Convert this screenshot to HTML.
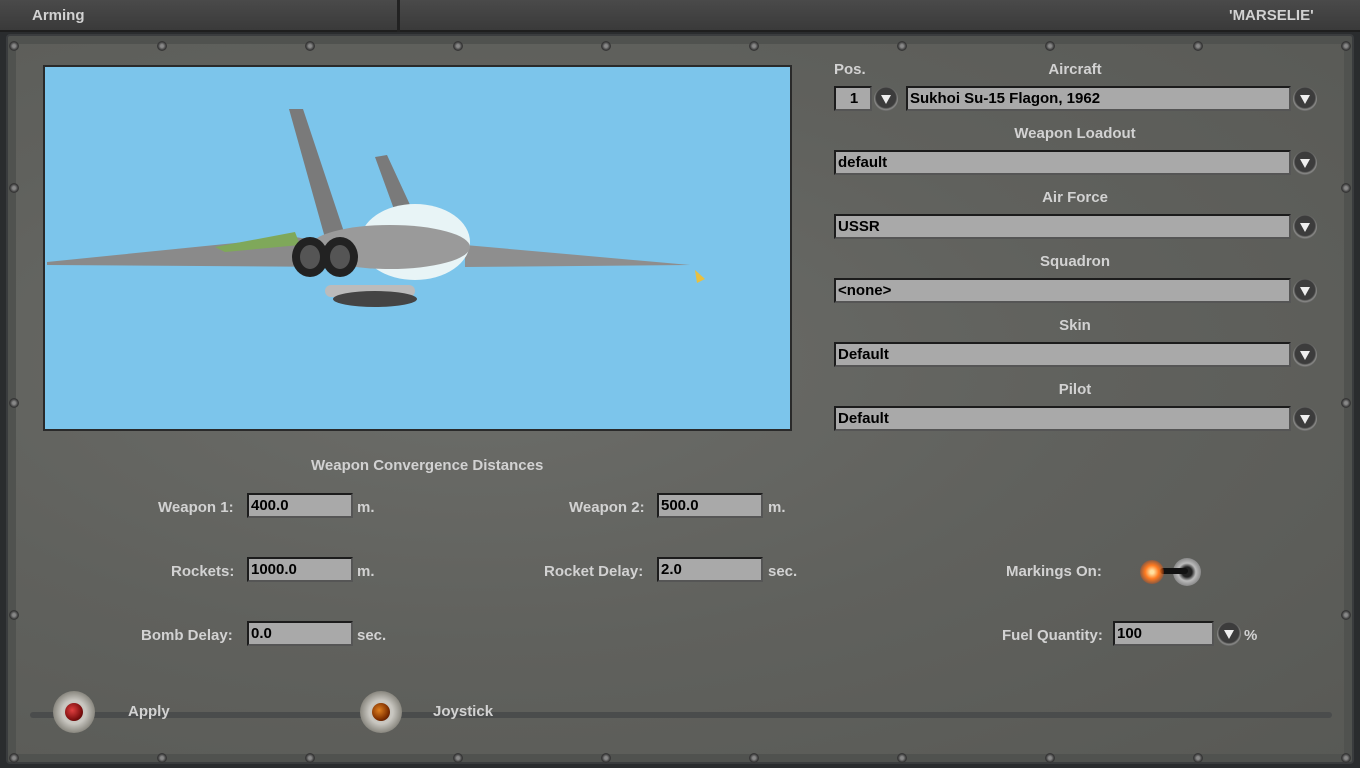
<!DOCTYPE html>
<html><head><meta charset="utf-8"><style>
*{margin:0;padding:0;box-sizing:border-box}
body{width:1360px;height:768px;overflow:hidden;background:#2a2c2e;font-family:"Liberation Sans",sans-serif;position:relative}
.top{position:absolute;left:0;top:0;width:1360px;height:32px;background:linear-gradient(#4a4a4a,#3a3a3a);border-bottom:2px solid #1e1e1e}
.top .d{position:absolute;left:397px;top:0;width:3px;height:32px;background:#222}
.t{position:absolute;color:#d2d2d2;font-size:15px;font-weight:bold;white-space:nowrap}
.panel{position:absolute;left:6px;top:34px;width:1348px;height:730px;background:radial-gradient(ellipse at 35% 45%,#6c6d69,#60615d 50%,#585955);border:2px solid #3a3c3e;border-radius:4px;box-shadow:inset 0 0 0 8px #50524f}
.preview{position:absolute;left:43px;top:65px;width:749px;height:366px;background:#7cc5eb;border:2px solid #2a2a2a}
.f{position:absolute;background:#a9a9a9;border:2px solid #1c1c1c;border-right-color:#555;border-bottom-color:#555;color:#000;font-size:15px;font-weight:bold;padding-left:2px;line-height:21px;height:25px;white-space:nowrap}
.dd{position:absolute;width:24px;height:24px;border-radius:50%;background:radial-gradient(circle at 50% 45%,#3c3c3c 55%,#8a8a88 65%,#4a4a4a 80%)}
.dd:after{content:"";position:absolute;left:7px;top:8px;border-left:5px solid transparent;border-right:5px solid transparent;border-top:9px solid #eee}
.c{text-align:center;width:300px}
.screw{position:absolute;width:10px;height:10px;border-radius:50%;background:radial-gradient(circle,#888 20%,#333 60%,#555)}
.btn{position:absolute;width:42px;height:42px;border-radius:50%;background:radial-gradient(circle,#c8c6c0 40%,#8a8880 70%,#4a4a48)}
.btn i{position:absolute;left:12px;top:12px;width:18px;height:18px;border-radius:50%}
</style></head><body>
<div class="top"><div class="d"></div></div>
<div class="t" style="left:32px;top:7px">Arming</div>
<div class="t" style="left:1229px;top:7px">'MARSELIE'</div>
<div class="panel"></div>
<div class="screw" style="left:9px;top:41px"></div><div class="screw" style="left:157px;top:41px"></div><div class="screw" style="left:305px;top:41px"></div><div class="screw" style="left:453px;top:41px"></div><div class="screw" style="left:601px;top:41px"></div><div class="screw" style="left:749px;top:41px"></div><div class="screw" style="left:897px;top:41px"></div><div class="screw" style="left:1045px;top:41px"></div><div class="screw" style="left:1193px;top:41px"></div><div class="screw" style="left:1341px;top:41px"></div>
<div class="screw" style="left:9px;top:753px"></div><div class="screw" style="left:157px;top:753px"></div><div class="screw" style="left:305px;top:753px"></div><div class="screw" style="left:453px;top:753px"></div><div class="screw" style="left:601px;top:753px"></div><div class="screw" style="left:749px;top:753px"></div><div class="screw" style="left:897px;top:753px"></div><div class="screw" style="left:1045px;top:753px"></div><div class="screw" style="left:1193px;top:753px"></div><div class="screw" style="left:1341px;top:753px"></div>
<div class="screw" style="left:9px;top:183px"></div><div class="screw" style="left:9px;top:398px"></div><div class="screw" style="left:9px;top:610px"></div>
<div class="screw" style="left:1341px;top:183px"></div><div class="screw" style="left:1341px;top:398px"></div><div class="screw" style="left:1341px;top:610px"></div>
<div style="position:absolute;left:30px;top:712px;width:1302px;height:6px;background:#4a4c4c;border-radius:3px"></div>

<div class="preview">
<svg width="745" height="362" viewBox="0 0 745 362">
<polygon points="2,195 250,170 300,178 300,200 2,198" fill="#8a8a8a"/>
<polygon points="420,178 645,198 420,200" fill="#8e8e8e"/>
<polygon points="244,42 258,42 300,168 282,178" fill="#7a7a7a"/>
<polygon points="330,90 342,88 366,140 350,145" fill="#7a7a7a"/>
<polygon points="170,180 250,165 255,178 180,185" fill="#7fa85a"/>
<ellipse cx="370" cy="175" rx="55" ry="38" fill="#e8f4f6"/>
<ellipse cx="345" cy="180" rx="80" ry="22" fill="#9a9a9a"/>
<ellipse cx="265" cy="190" rx="18" ry="20" fill="#222"/><ellipse cx="295" cy="190" rx="18" ry="20" fill="#222"/>
<ellipse cx="265" cy="190" rx="10" ry="12" fill="#555"/><ellipse cx="295" cy="190" rx="10" ry="12" fill="#555"/>
<rect x="280" y="218" width="90" height="12" rx="6" fill="#bbb"/>
<ellipse cx="330" cy="232" rx="42" ry="8" fill="#444"/>
<polygon points="650,203 660,212 652,216" fill="#e8c040"/>
</svg>
</div>

<div class="t" style="left:834px;top:61px">Pos.</div>
<div class="t c" style="left:925px;top:61px">Aircraft</div>
<div class="f" style="left:834px;top:86px;width:38px;text-align:center">1</div>
<div class="dd" style="left:874px;top:87px"></div>
<div class="f" style="left:906px;top:86px;width:385px">Sukhoi Su-15 Flagon, 1962</div>
<div class="dd" style="left:1293px;top:87px"></div>

<div class="t c" style="left:925px;top:125px">Weapon Loadout</div>
<div class="f" style="left:834px;top:150px;width:457px">default</div><div class="dd" style="left:1293px;top:151px"></div>
<div class="t c" style="left:925px;top:189px">Air Force</div>
<div class="f" style="left:834px;top:214px;width:457px">USSR</div><div class="dd" style="left:1293px;top:215px"></div>
<div class="t c" style="left:925px;top:253px">Squadron</div>
<div class="f" style="left:834px;top:278px;width:457px">&lt;none&gt;</div><div class="dd" style="left:1293px;top:279px"></div>
<div class="t c" style="left:925px;top:317px">Skin</div>
<div class="f" style="left:834px;top:342px;width:457px">Default</div><div class="dd" style="left:1293px;top:343px"></div>
<div class="t c" style="left:925px;top:381px">Pilot</div>
<div class="f" style="left:834px;top:406px;width:457px">Default</div><div class="dd" style="left:1293px;top:407px"></div>

<div class="t" style="left:311px;top:457px">Weapon Convergence Distances</div>
<div class="t" style="left:158px;top:499px">Weapon 1:</div>
<div class="f" style="left:247px;top:493px;width:106px">400.0</div>
<div class="t" style="left:357px;top:499px">m.</div>
<div class="t" style="left:569px;top:499px">Weapon 2:</div>
<div class="f" style="left:657px;top:493px;width:106px">500.0</div>
<div class="t" style="left:768px;top:499px">m.</div>

<div class="t" style="left:171px;top:563px">Rockets:</div>
<div class="f" style="left:247px;top:557px;width:106px">1000.0</div>
<div class="t" style="left:357px;top:563px">m.</div>
<div class="t" style="left:544px;top:563px">Rocket Delay:</div>
<div class="f" style="left:657px;top:557px;width:106px">2.0</div>
<div class="t" style="left:768px;top:563px">sec.</div>
<div class="t" style="left:1006px;top:563px">Markings On:</div>
<div style="position:absolute;left:1173px;top:558px;width:28px;height:28px;border-radius:50%;background:radial-gradient(circle,#222 25%,#bbb 45%,#777 80%)"></div>
<div style="position:absolute;left:1160px;top:568px;width:28px;height:6px;background:#111;border-radius:3px"></div>
<div style="position:absolute;left:1140px;top:560px;width:24px;height:24px;border-radius:50%;background:radial-gradient(circle,#ffe0a0 10%,#ff7a20 40%,rgba(255,80,0,0.3) 70%,transparent 75%)"></div>

<div class="t" style="left:141px;top:627px">Bomb Delay:</div>
<div class="f" style="left:247px;top:621px;width:106px">0.0</div>
<div class="t" style="left:357px;top:627px">sec.</div>
<div class="t" style="left:1002px;top:627px">Fuel Quantity:</div>
<div class="f" style="left:1113px;top:621px;width:101px">100</div>
<div class="dd" style="left:1217px;top:622px"></div>
<div class="t" style="left:1244px;top:627px">%</div>

<div class="btn" style="left:53px;top:691px"><i style="background:radial-gradient(circle at 40% 40%,#e04040,#801010 60%,#300)"></i></div>
<div class="t" style="left:128px;top:703px">Apply</div>
<div class="btn" style="left:360px;top:691px"><i style="background:radial-gradient(circle at 40% 40%,#e08020,#803000 60%,#300)"></i></div>
<div class="t" style="left:433px;top:703px">Joystick</div>
</body></html>
